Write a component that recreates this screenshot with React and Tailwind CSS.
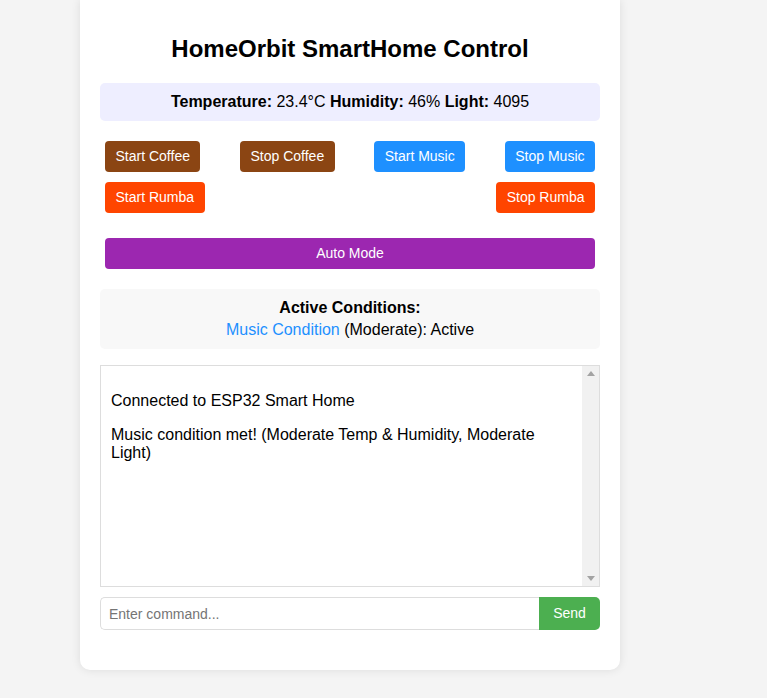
import React from "react";

const buttons = [
  { label: "Start Coffee", color: "bg-[#8b4513]" },
  { label: "Stop Coffee", color: "bg-[#8b4513]" },
  { label: "Start Music", color: "bg-[#1e90ff]" },
  { label: "Stop Music", color: "bg-[#1e90ff]" },
  { label: "Start Rumba", color: "bg-[#ff4500]" },
  { label: "Stop Rumba", color: "bg-[#ff4500]" },
];

export default function App() {
  return (
    <div
      className="min-h-[698px] bg-[#f4f4f4] text-black"
      style={{ fontFamily: '"Liberation Sans", Arial, sans-serif' }}
    >
      <div className="ml-[80px] w-[540px] bg-white rounded-b-[10px] shadow-[0_0_10px_rgba(0,0,0,0.1)] px-5 pt-[35px] pb-10">
        <h1 className="text-center text-[24px] font-bold leading-[28px] mb-[20px]">
          HomeOrbit SmartHome Control
        </h1>

        <div className="bg-[#eeeeff] rounded-[5px] py-[10px] text-center text-[16px] leading-[18px]">
          <b>Temperature:</b> 23.4°C <b>Humidity:</b> 46% <b>Light:</b> 4095
        </div>

        <div className="flex flex-wrap justify-between mt-[15px]">
          {buttons.map((b) => (
            <button
              key={b.label}
              className={`${b.color} text-white text-[14px] leading-[17px] px-[10.5px] py-[7px] m-[5px] rounded-[4px]`}
            >
              {b.label}
            </button>
          ))}
        </div>

        <button className="block w-[490px] mx-[5px] mt-[20px] bg-[#9c27b0] text-white text-[14px] leading-[17px] py-[7px] rounded-[4px]">
          Auto Mode
        </button>

        <div className="mt-[20px] bg-[#f8f8f8] rounded-[5px] py-[10px] text-center text-[16px] leading-[18px]">
          <div className="font-bold mb-1">Active Conditions:</div>
          <div>
            <span className="text-[#1e90ff]">Music Condition</span> (Moderate): Active
          </div>
        </div>

        <div className="mt-4 h-[222px] border border-[#dddddd] flex">
          <div className="flex-1 px-[10px] pt-[10px] text-[16px] leading-[18px]">
            <p className="mt-4">Connected to ESP32 Smart Home</p>
            <p className="mt-4">
              Music condition met! (Moderate Temp &amp; Humidity, Moderate Light)
            </p>
          </div>
          <div className="w-[17px] bg-[#f1f1f1] flex flex-col justify-between items-center py-[5px]">
            <svg width="8" height="5" viewBox="0 0 8 5">
              <path d="M0 5 L4 0 L8 5 Z" fill="#a3a3a3" />
            </svg>
            <svg width="8" height="5" viewBox="0 0 8 5">
              <path d="M0 0 L4 5 L8 0 Z" fill="#a3a3a3" />
            </svg>
          </div>
        </div>

        <div className="flex mt-[10px]">
          <input
            className="flex-1 h-[33px] border border-[#dddddd] border-r-0 rounded-l-[5px] px-2 text-[14px] outline-none placeholder:text-[#757575]"
            placeholder="Enter command..."
          />
          <button className="w-[61px] h-[33px] bg-[#4caf50] text-white text-[14px] rounded-r-[5px]">
            Send
          </button>
        </div>
      </div>
    </div>
  );
}
